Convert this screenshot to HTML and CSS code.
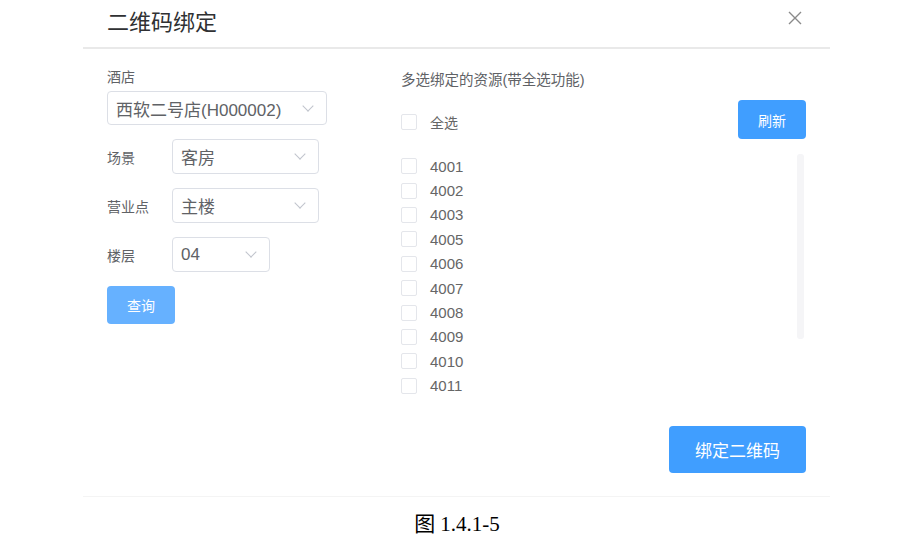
FILE: index.html
```html
<!DOCTYPE html>
<html>
<head>
	<meta charset="utf-8">
	<title>二维码绑定</title>
	<link rel="stylesheet" href="styles.css">
</head>
<body>
	<section class="dialog">
		<header class="dialog-head">
			<h1>二维码绑定</h1>
			<span class="close">
				<svg width="14" height="14" viewBox="0 0 14 14"><path d="M1 1L13 13M13 1L1 13" stroke="#8a8a8a" stroke-width="1.4" fill="none"/></svg>
			</span>
		</header>

		<div class="dialog-body">
			<div class="col-left">
				<div class="label-top">酒店</div>
				<div class="select wide"><span>西软二号店(H000002)</span><i class="chev"></i></div>

				<div class="row">
					<label>场景</label>
					<div class="select mid"><span>客房</span><i class="chev"></i></div>
				</div>
				<div class="row">
					<label>营业点</label>
					<div class="select mid"><span>主楼</span><i class="chev"></i></div>
				</div>
				<div class="row">
					<label>楼层</label>
					<div class="select small"><span>04</span><i class="chev"></i></div>
				</div>
				<button class="btn btn-query">查询</button>
			</div>

			<div class="col-right">
				<div class="res-title">多选绑定的资源(带全选功能)</div>
				<div class="all-row">
					<label class="check"><span class="box"></span>全选</label>
					<button class="btn btn-refresh">刷新</button>
				</div>
				<div class="list-wrap">
					<ul class="res-list">
						<li class="check"><span class="box"></span>4001</li>
						<li class="check"><span class="box"></span>4002</li>
						<li class="check"><span class="box"></span>4003</li>
						<li class="check"><span class="box"></span>4005</li>
						<li class="check"><span class="box"></span>4006</li>
						<li class="check"><span class="box"></span>4007</li>
						<li class="check"><span class="box"></span>4008</li>
						<li class="check"><span class="box"></span>4009</li>
						<li class="check"><span class="box"></span>4010</li>
						<li class="check"><span class="box"></span>4011</li>
					</ul>
					<div class="scroll-track"></div>
				</div>
			</div>
		</div>

		<footer class="dialog-foot">
			<button class="btn btn-bind">绑定二维码</button>
		</footer>
	</section>

	<p class="caption">图 1.4.1-5</p>
</body>
</html>
```

FILE: styles.css
```css
body {
	margin: 0; background: #fff; font-family: "Liberation Sans", "Noto Sans CJK SC", sans-serif; color: #606266;
}
.dialog { width: 747px; margin-left: 83px; border-bottom: 1px solid #f4f4f4; }
.dialog-head {
	display: flex; justify-content: space-between; align-items: center; height: 47px; padding: 0 28px 0 24px; border-bottom: 2px solid #e9e9e9;
}
.dialog-head h1 { margin: 0; font-size: 22px; font-weight: normal; color: #303133; line-height: 1; padding-bottom: 1px; }
.close { display: flex; margin-top: -12px; }

.dialog-body { display: flex; padding: 20px 24px 0 24px; }
.col-left { width: 294px; font-size: 14px; }
.label-top { line-height: 16px; margin-bottom: 6px; color: #606266; }
.row { display: flex; align-items: center; margin-top: 14px; }
.row label { width: 65px; }

.select {
	display: flex; align-items: center; justify-content: space-between; box-sizing: border-box; height: 35px; padding: 0 14px 0 8px; border: 1px solid #dcdfe6; border-radius: 4px; font-size: 17px; color: #606266;
}
.select.wide { width: 220px; height: 34px; }
.select.mid { width: 147px; }
.select.small { width: 98px; }
.chev {
	width: 7px; height: 7px; border-right: 1px solid #c0c4cc; border-bottom: 1px solid #c0c4cc; transform: rotate(45deg); margin-top: -5px;
}

.btn { border: 0; border-radius: 4px; color: #fff; font-family: inherit; cursor: pointer; }
.btn-query { margin-top: 14px; width: 68px; height: 38px; background: #66b1ff; font-size: 14px; }
.btn-refresh { width: 68px; height: 39px; background: #409eff; font-size: 14px; }
.btn-bind { width: 137px; height: 47px; background: #409eff; font-size: 17px; }

.col-right { flex: 1; font-size: 14px; }
.res-title { line-height: 16px; margin-top: 3px; font-size: 14.5px; }
.all-row { display: flex; justify-content: space-between; align-items: center; margin-top: 12px; }
.check { display: flex; align-items: center; font-size: 15px; color: #666; }
.check .box {
	width: 16px; height: 16px; border: 1px solid #e4e6eb; border-radius: 2px; margin-right: 13px; box-sizing: border-box;
}
.all-row .check { margin-top: 4px; font-size: 14px; }

.list-wrap { display: flex; justify-content: space-between; margin-top: 15px; }
.res-list { list-style: none; margin: 0; padding: 0; }
.res-list li { height: 24.4px; }
.scroll-track { width: 7px; height: 185px; background: #f5f5f7; border-radius: 3px; margin-right: 2px; }

.dialog-foot { display: flex; justify-content: flex-end; padding: 28px 24px 23px; }

.caption { margin: 10px 0 0; text-align: center; padding-left: 10px; font-family: "Liberation Serif", "Noto Sans CJK SC", serif; font-size: 21px; color: #000; }
```
